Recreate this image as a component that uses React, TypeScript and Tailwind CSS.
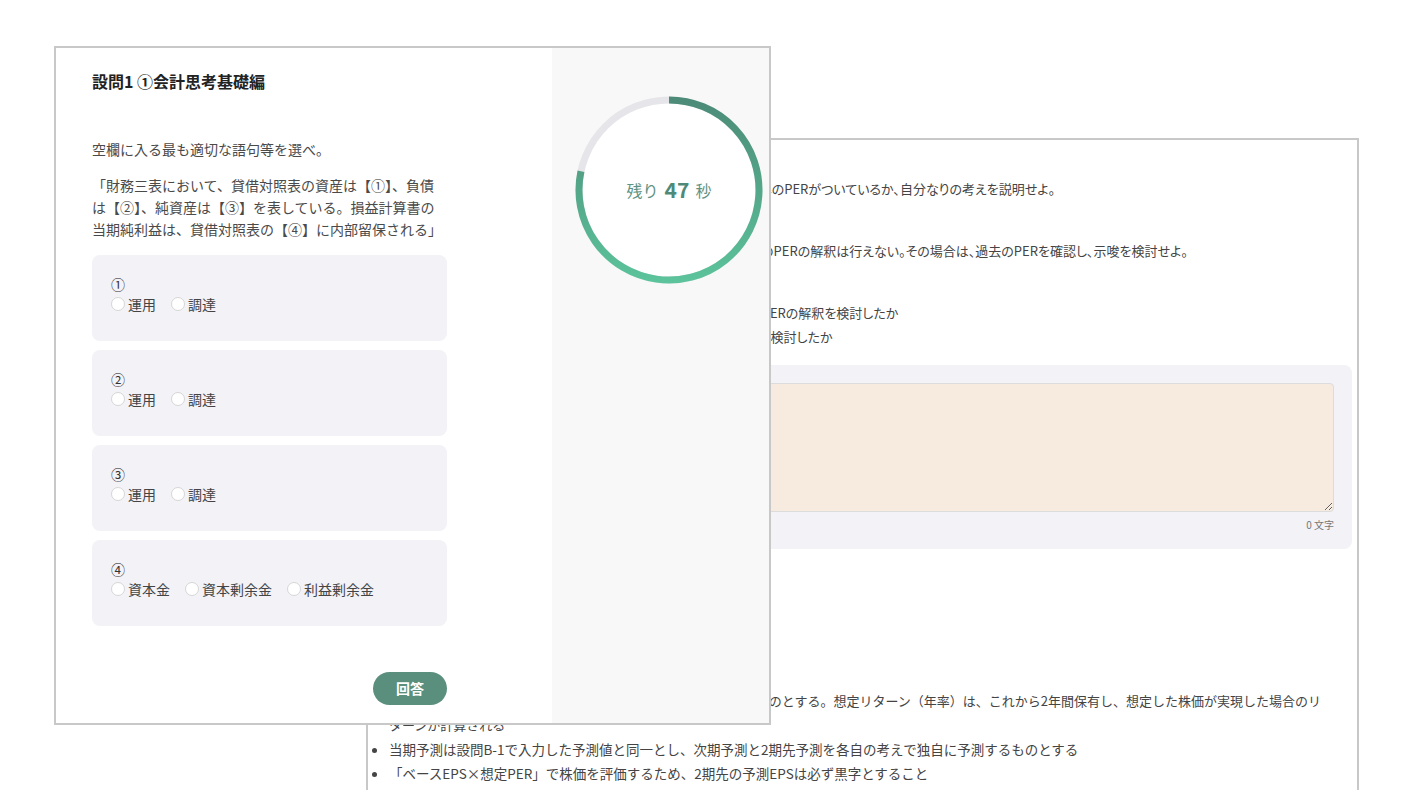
import React from "react";

const font = "[font-family:'Noto_Sans_CJK_JP','Noto_Sans',sans-serif]";

interface ChoiceGroupProps {
  label: string;
  name: string;
  options: string[];
}

function ChoiceGroup({ label, name, options }: ChoiceGroupProps) {
  return (
    <div className="h-[86px] w-[355px] rounded-lg bg-[#f2f2f7] pl-[19px] pt-[19px]">
      <div className="text-[14px] leading-[20px] text-[#333]">{label}</div>
      <div className="flex items-center gap-[15px] text-[14px] leading-[20px] text-[#444]">
        {options.map((opt) => (
          <label key={opt} className="flex items-center gap-[3px]">
            <input
              type="radio"
              name={name}
              className="h-[14px] w-[14px] appearance-none rounded-full border border-[#d6d6d6] bg-white"
            />
            <span>{opt}</span>
          </label>
        ))}
      </div>
    </div>
  );
}

function TimerRing({ seconds, total }: { seconds: number; total: number }) {
  const angle = (seconds / total) * Math.PI * 2;
  const r = 90;
  const cx = 94;
  const ex = cx + r * Math.sin(angle);
  const ey = cx - r * Math.cos(angle);
  const large = seconds / total > 0.5 ? 1 : 0;

  return (
    <div className="relative h-[188px] w-[188px]">
      <svg width="188" height="188" viewBox="0 0 188 188">
        <defs>
          <linearGradient id="ring" x1="0" y1="0" x2="0" y2="188" gradientUnits="userSpaceOnUse">
            <stop offset="0" stopColor="#4c8a77" />
            <stop offset="1" stopColor="#5cc49c" />
          </linearGradient>
        </defs>
        <circle cx={cx} cy={cx} r={r} fill="#ffffff" stroke="#e6e6ea" strokeWidth="7" />
        <path
          d={`M ${cx} ${cx - r} A ${r} ${r} 0 ${large} 1 ${ex} ${ey}`}
          fill="none"
          stroke="url(#ring)"
          strokeWidth="7"
        />
      </svg>
      <div className="absolute inset-0 flex items-center justify-center gap-[6px] text-[#5f9383]">
        <span className="text-[16px]">残り</span>
        <span className="text-[21px] font-bold text-[#4e8a77]">{seconds}</span>
        <span className="text-[16px]">秒</span>
      </div>
    </div>
  );
}

function BackgroundWindow() {
  return (
    <div className="absolute left-[366px] top-[138px] h-[700px] w-[993px] border-2 border-[#c8c8c8] bg-white pl-[10px] pr-[5px] pt-[37px] text-[13px] leading-[24px] text-[#444]">
      <div className="[font-feature-settings:'palt']">
        <p className="whitespace-nowrap">
          設問B-3：財務指標の推移を踏まえてなぜ現在の株価にこれほどの水準のPERがついているか、自分なりの考えを説明せよ。
        </p>
        <p className="mt-[38px] whitespace-nowrap">
          ※赤字企業や、利益水準が極端に小さい企業の場合には、実績ベースのPERの解釈は行えない。その場合は、過去のPERを確認し、示唆を検討せよ。
        </p>
        <p className="mt-[38px] whitespace-nowrap">
          ・評価ポイント：株価水準と同業他社の平均との十分な比較の観点で、PERの解釈を検討したか
        </p>
        <p className="whitespace-nowrap">・評価ポイント：赤字等でPERが算出できない場合、過去のPERの推移を検討したか</p>
      </div>

      <div className="mt-[16px] rounded-lg bg-[#f2f2f7] px-[18px] pb-[17px] pt-[18px]">
        <textarea className="block h-[129px] w-full resize-y rounded-sm border border-[#dcdcdc] bg-[#f7ebe0]" />
        <div className="mt-[6px] text-right text-[10px] leading-[14px] text-[#777]">0 文字</div>
      </div>

      <ul className="mt-[140px] list-disc pl-[11px]">
        <li className="whitespace-nowrap">
          想定株価は2期先の予測EPSに想定したPERを乗じて算出されるものとする。想定リターン（年率）は、これから2年間保有し、想定した株価が実現した場合のリ
          <br />
          ターンが計算される
        </li>
        <li className="text-[13.5px]">
          当期予測は設問B-1で入力した予測値と同一とし、次期予測と2期先予測を各自の考えで独自に予測するものとする
        </li>
        <li className="text-[13.5px]">「ベースEPS×想定PER」で株価を評価するため、2期先の予測EPSは必ず黒字とすること</li>
      </ul>
    </div>
  );
}

export default function App() {
  return (
    <div className={`relative h-[790px] w-[1416px] overflow-hidden bg-white ${font}`}>
      <BackgroundWindow />

      <div className="absolute left-[54px] top-[46px] flex h-[679px] w-[717px] border-2 border-[#c8c8c8] bg-white">
        <div className="flex w-[496px] flex-col pl-[36px] pt-[21px]">
          <h2 className="text-[16px] font-bold leading-[24px] text-[#222]">設問1&nbsp;①会計思考基礎編</h2>
          <p className="mt-[45px] text-[14px] leading-[22px] text-[#4a4a4a]">空欄に入る最も適切な語句等を選べ。</p>
          <p className="mt-[14px] whitespace-nowrap text-[14px] leading-[22px] text-[#4a4a4a]">
            「財務三表において、貸借対照表の資産は【①】、負債
            <br />
            は【②】、純資産は【③】を表している。損益計算書の
            <br />
            当期純利益は、貸借対照表の【④】に内部留保される」
          </p>

          <div className="mt-[15px] flex flex-col gap-[9px]">
            <ChoiceGroup label="①" name="q1" options={["運用", "調達"]} />
            <ChoiceGroup label="②" name="q2" options={["運用", "調達"]} />
            <ChoiceGroup label="③" name="q3" options={["運用", "調達"]} />
            <ChoiceGroup label="④" name="q4" options={["資本金", "資本剰余金", "利益剰余金"]} />
          </div>

          <div className="mt-[46px] flex w-[355px] justify-end">
            <button className="h-[33px] w-[74px] rounded-full bg-[#5b8f7d] text-[14px] font-bold text-white">
              回答
            </button>
          </div>
        </div>

        <div className="flex-1 bg-[#f8f8f8] pl-[23px] pt-[48px]">
          <TimerRing seconds={47} total={60} />
        </div>
      </div>
    </div>
  );
}
